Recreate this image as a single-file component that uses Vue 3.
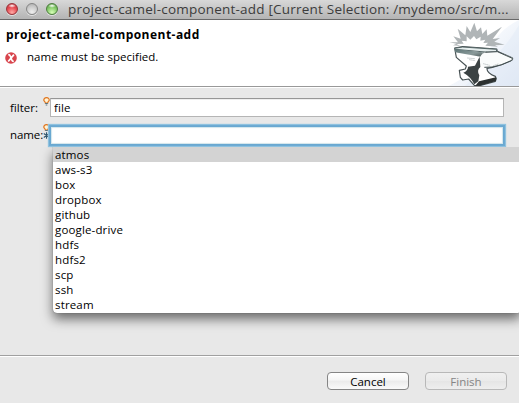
<script setup>
import { ref } from 'vue'

const filter = ref('file')
const name = ref('')
const selected = ref('atmos')
const proposals = ['atmos', 'aws-s3', 'box', 'dropbox', 'github', 'google-drive', 'hdfs', 'hdfs2', 'scp', 'ssh', 'stream']
</script>

<template>
  <div class="window">
    <div class="titlebar">
      <span class="light red"></span>
      <span class="light gray"></span>
      <span class="light green"></span>
      <span class="title">project-camel-component-add [Current Selection: /mydemo/src/m...</span>
    </div>

    <header class="header">
      <div class="heading-block">
        <h1 class="heading">project-camel-component-add</h1>
        <div class="message">
          <svg class="error-icon" viewBox="0 0 12 12">
            <circle cx="6" cy="6" r="5.8" fill="#d8444c" />
            <path d="M3.2 2.6 Q4.8 2.6 5.5 4.5 L6.8 8 Q7.3 9.4 8.8 9.3 M8.9 2.6 L3.2 9.5" fill="none" stroke="#fff" stroke-width="1.7" />
          </svg>
          <span class="message-text">name must be specified.</span>
        </div>
      </div>
      <svg class="anvil" viewBox="0 6 237 198">
        <defs>
          <linearGradient id="sky" x1="0" y1="0" x2="1" y2="1">
            <stop offset="0" stop-color="#fff" />
            <stop offset="0.45" stop-color="#f5f8fc" />
            <stop offset="1" stop-color="#e0e8f5" />
          </linearGradient>
          <linearGradient id="iron" x1="0" y1="0" x2="1" y2="0.6">
            <stop offset="0" stop-color="#5b7374" />
            <stop offset="0.6" stop-color="#8a9a9a" />
            <stop offset="1" stop-color="#4a5555" />
          </linearGradient>
        </defs>
        <path d="M237 6 V204 H25 Q110 165 145 100 Q175 35 237 6 Z" fill="url(#sky)" />
        <path d="M237 22 Q205 75 170 110 Q120 160 75 204 H237 Z" fill="#dfe8f6" opacity=".4" />
        <path d="M28 73 L54 73 L40 55 L62 62 L53 32 L76 52 L80 24 L91 42 L103 14 L111 40 L123 28 L127 48 L140 34 L142 53 L186 26 L158 63 L180 60 L163 71 L194 80 L165 82 L174 86 L136 83 L144 74 L130 75 L136 65 L121 68 L122 56 L109 64 L102 54 L91 65 L80 55 L80 70 L65 68 L71 77 L49 78 L61 84 L39 82 L50 77 Z" fill="#b0b5b7" />
        <path d="M44 90 L68 86 L170 93 L172 100 L216 119 Q220 122 216 126 Q190 141 157 148 L141 151 Q140 165 166 175 L169 182 L166 190 L119 203 L103 202 L86 183 L68 186 L61 178 L58 157 L76 153 L79 144 L49 118 Z" fill="#fff" stroke="#465052" stroke-width="3.5" stroke-linejoin="round" />
        <path d="M44 91 L68 87 L170 94 L169 101 L136 102 L45 94 Z" fill="#e6eeee" stroke="#526364" stroke-width="3" />
        <path d="M44 93 L128 103 L165 99 L134 108 L122 116 L45 103 Z" fill="url(#iron)" />
        <path d="M84 146 L105 143 L119 116 L121 147 Q109 157 118 172 L115 190 L103 199 Q92 176 70 164 Q84 158 84 146 Z" fill="#3b4243" />
        <path d="M121 116 Q125 104 143 101 L172 101 L216 119 Q220 122 216 126 Q185 141 157 146 L132 147 Q119 144 121 116 Z" fill="#fafcfc" />
        <path d="M136 103 L172 101 L217 121 Q219 124 213 128 Q183 143 156 147 L133 148" fill="none" stroke="#435052" stroke-width="3" />
        <path d="M117 190 L168 178 L168 189 L119 203 L106 203 Z" fill="#2c3030" />
        <path d="M82 120 L104 122 M88 125 L106 128 M130 137 L149 142 M160 143 L175 138" stroke="#a9b2b3" stroke-width="2.5" stroke-dasharray="4 2" />
      </svg>
    </header>

    <main class="body">
      <div class="row">
        <label class="label" for="filter">filter:</label>
        <span class="decor">
          <svg class="bulb" viewBox="0 0 7 9"><path d="M3.5 .7 C1.6 .7 .8 1.7 .8 3 C.8 4.4 2.3 4.4 2.3 6 H4.7 C4.7 4.4 6.2 4.4 6.2 3 C6.2 1.7 5.4 .7 3.5 .7 Z" fill="#fff3d5" stroke="#e0741c" stroke-width="1.2" /><path d="M2.2 6.5 H4.8 M2.7 8 H4.3" stroke="#56717d" /></svg>
        </span>
        <input id="filter" v-model="filter" class="field" type="text" />
      </div>
      <div class="row name-row">
        <label class="label" for="name">name:</label>
        <span class="decor">
          <svg class="bulb" viewBox="0 0 7 9"><path d="M3.5 .7 C1.6 .7 .8 1.7 .8 3 C.8 4.4 2.3 4.4 2.3 6 H4.7 C4.7 4.4 6.2 4.4 6.2 3 C6.2 1.7 5.4 .7 3.5 .7 Z" fill="#fff3d5" stroke="#e0741c" stroke-width="1.2" /><path d="M2.2 6.5 H4.8" stroke="#56717d" /></svg>
          <svg class="star" viewBox="0 0 7 7"><path d="M3.5 .3 V6.7 M.8 1.5 L6.2 5.5 M6.2 1.5 L.8 5.5" stroke="#31566e" stroke-width="1.1" /></svg>
        </span>
        <input id="name" v-model="name" class="field focused" type="text" />
        <ul class="popup">
          <li v-for="p in proposals" :key="p" :class="['option', { selected: p === selected }]" @click="selected = p">{{ p }}</li>
        </ul>
      </div>
    </main>

    <footer class="footer">
      <button class="button">Cancel</button>
      <button class="button" disabled>Finish</button>
    </footer>
  </div>
</template>

<style>
body {
  margin: 0;
  overflow: hidden;
}
</style>

<style scoped>
* {
  box-sizing: border-box;
}
.window {
  width: 519px;
  height: 403px;
  display: flex;
  flex-direction: column;
  overflow: hidden;
  background: #e8e8e8;
  color: #000;
  font: 11.5px/15px "Open Sans", "Noto Sans", sans-serif;
}
.titlebar {
  height: 20px;
  flex: none;
  display: flex;
  align-items: center;
  gap: 8px;
  padding: 0 0 1px 6px;
  background: linear-gradient(#d8d8d8, #b4b4b4);
  border-bottom: 1px solid #686868;
}
.light {
  width: 12px;
  height: 12px;
  flex: none;
  border-radius: 50%;
  border: 1px solid #777;
  box-shadow: 0 1px 0 #e2e2e2;
}
.red {
  border-color: #98333a;
  background: radial-gradient(ellipse 4px 2px at 50% 18%, #fff, transparent), radial-gradient(circle at 50% 85%, #ffaaa5, #e64a51 55%, #b92d36);
}
.gray {
  border-color: #858585;
  background: radial-gradient(circle at 50% 80%, #eee, #ccc 55%, #aaa);
}
.green {
  border-color: #4d7d3e;
  background: radial-gradient(ellipse 4px 2px at 50% 18%, #fff, transparent), radial-gradient(circle at 50% 85%, #d7ffb8, #83c968 55%, #4e943d);
}
.title {
  margin-left: 2px;
  font-size: 13.5px;
  letter-spacing: 0.21px;
  line-height: 18px;
  white-space: nowrap;
  color: #3c3c3c;
}
.header {
  height: 67px;
  flex: none;
  display: flex;
  justify-content: space-between;
  background: #fff;
  border-bottom: 1px solid #999;
}
.heading-block {
  padding: 7px 0 0 5px;
}
.heading {
  margin: 0 0 0 1px;
  font-size: 12px;
  line-height: 16px;
  font-weight: 700;
  letter-spacing: 0.47px;
  white-space: nowrap;
}
.message {
  display: flex;
  align-items: center;
  gap: 10px;
  margin-top: 6px;
}
.error-icon {
  width: 12px;
  height: 12px;
  margin-top: 2px;
}
.message-text {
  letter-spacing: 0.02px;
}
.anvil {
  width: 79px;
  height: 66px;
}
.body {
  flex: 1;
  padding: 10px 15px 0 10px;
  border-top: 1px solid #fff;
}
.row {
  position: relative;
  display: flex;
  height: 19px;
}
.name-row {
  margin-top: 9px;
}
.label {
  width: 33px;
  line-height: 19px;
  white-space: nowrap;
}
.name-row .label {
  line-height: 18px;
  letter-spacing: -0.1px;
}
.decor {
  width: 7px;
  display: flex;
  flex-direction: column;
}
.bulb {
  width: 7px;
  height: 9px;
  flex: none;
}
.row:first-child .bulb {
  margin-top: -1px;
}
.name-row .bulb {
  margin-top: -2px;
  margin-bottom: -1px;
}
.star {
  width: 7px;
  height: 7px;
}
.field {
  flex: 1;
  min-width: 0;
  height: 19px;
  padding: 0 3px;
  border: 1px solid #b5b5b5;
  border-top-color: #969696;
  background: #fff;
  box-shadow: inset 0 1px 0 #eee;
  font: inherit;
  letter-spacing: 0.1px;
  color: #000;
  outline: none;
}
.focused {
  border-color: #69a8d1;
  box-shadow: 0 0 0 1px #6eabd3, 0 0 1px 2px #8fc2df, inset 0 0 1px 1px #d2e5ec;
}
.popup {
  position: absolute;
  left: 43px;
  top: 21px;
  width: 468px;
  height: 166px;
  margin: 0;
  padding: 0;
  list-style: none;
  overflow: hidden;
  background: #fff;
  border-radius: 0 0 4px 4px;
}
.name-row::after {
  content: "";
  position: absolute;
  left: 43px;
  top: 21px;
  width: 468px;
  height: 166px;
  border-radius: 0 0 4px 4px;
  box-shadow: 0 0 1px #555, 0 6px 12px rgba(0, 0, 0, 0.55);
  pointer-events: none;
  clip-path: inset(0 -10px -30px -20px);
}
.option {
  height: 15px;
  padding-left: 2px;
  letter-spacing: 0.15px;
}
.selected {
  background: #d3d3d3;
}
.footer {
  height: 48px;
  flex: none;
  display: flex;
  justify-content: flex-end;
  gap: 16px;
  padding: 16px 12px 0;
  border-top: 1px solid #a0a0a0;
  box-shadow: inset 0 1px 0 #fff;
}
.button {
  width: 82px;
  height: 18px;
  padding: 0;
  border: 1px solid #858585;
  border-radius: 4px;
  background: linear-gradient(#fff, #f5f5f5 45%, #ebebeb 50%, #fafafa);
  font: inherit;
  line-height: 15px;
  letter-spacing: 0;
  color: #000;
}
.button:disabled {
  border-color: #b8b8b8;
  background: linear-gradient(#f0f0f0, #eaeaea 50%, #e5e5e5 50%, #eee);
  color: #858585;
}
</style>
